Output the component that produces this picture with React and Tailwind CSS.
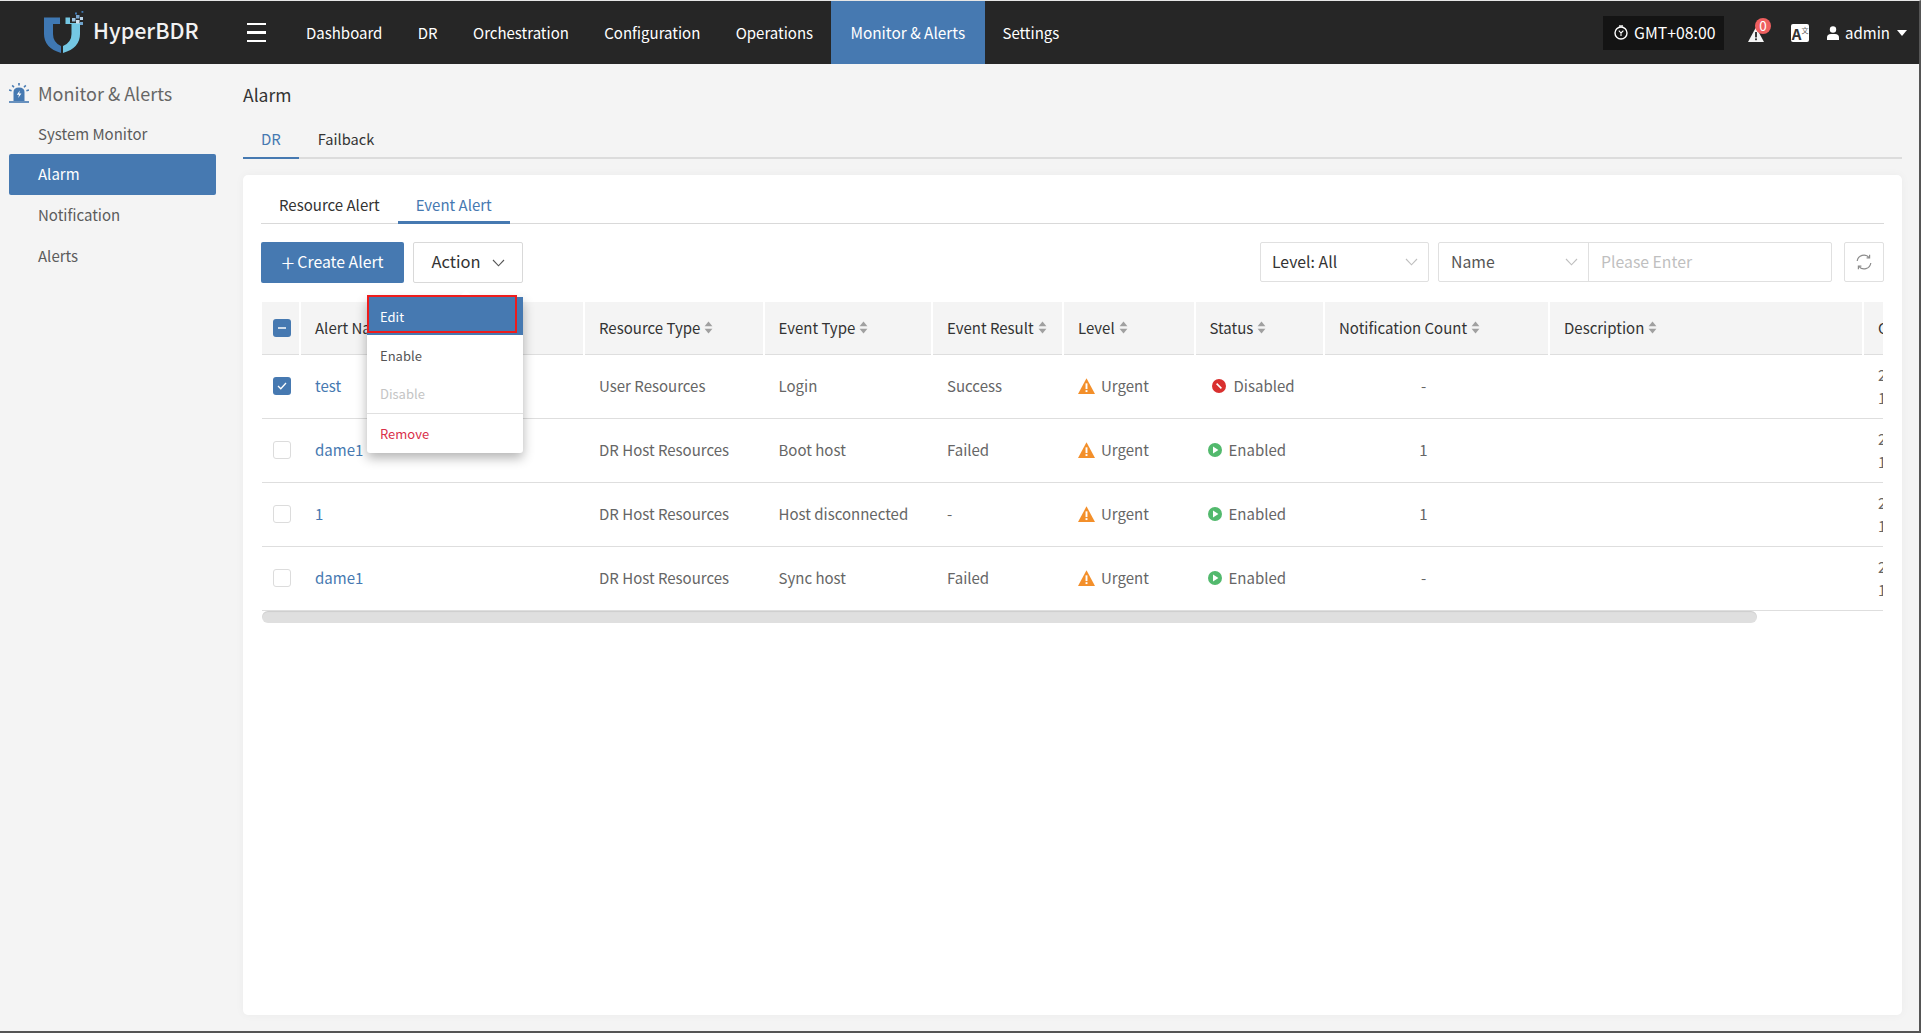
import React from 'react';

const font = "[font-family:'Noto_Sans_CJK_SC','Noto_Sans',sans-serif]";

function Logo() {
  return (
    <svg width="44" height="48" viewBox="40 10 44 48" className="shrink-0">
      <path d="M44 18.5 H60 V25 H53 V35 Q53 43.5 61 47 V54 Q44 49 44 35 Z" fill="#3f78b3" />
      <path d="M65.5 18.5 H80 V35 Q80 49 63 54 V47 Q71.5 43.5 71.5 35 V25 H65.5 Z" fill="#74c7e3" />
      <rect x="70" y="15" width="10.5" height="9" fill="#262626" />
      <rect x="72" y="19" width="3.5" height="3.5" fill="#9cc2e0" />
      <rect x="76" y="16" width="3.5" height="3.5" fill="#7aa6cf" />
      <rect x="76" y="21" width="3.5" height="3.5" fill="#cfe0ee" />
      <rect x="80" y="18" width="3" height="3" fill="#b9d2e6" />
      <rect x="80" y="23" width="3" height="3" fill="#6fa3cc" />
      <rect x="81.5" y="12" width="1.8" height="1.8" fill="#3f78b3" />
      <rect x="75" y="13.5" width="2" height="2" fill="#3f78b3" />
    </svg>
  );
}

function Siren() {
  return (
    <svg width="20" height="20" viewBox="0 0 20 20" className="shrink-0">
      <path d="M4.5 18 V9 Q4.5 4.5 10 4.5 Q15.5 4.5 15.5 9 V18 Z" fill="#4679b1" />
      <rect x="0" y="18.2" width="20" height="1.6" fill="#4679b1" />
      <path d="M10.8 7.5 L7.8 11.8 H10 L9.2 15 L12.4 10.6 H10.2 Z" fill="#fff" />
      <path d="M10 0 V2.6 M3.2 2.4 L5 4.2 M16.8 2.4 L15 4.2 M0 7 L2.6 7.8 M20 7 L17.4 7.8" stroke="#4679b1" strokeWidth="1.6" fill="none" />
    </svg>
  );
}

function Clock() {
  return (
    <svg width="14" height="15" viewBox="0 0 14 15" className="shrink-0">
      <circle cx="7" cy="8" r="6" fill="none" stroke="#fff" strokeWidth="1.4" />
      <path d="M5 1 H9" stroke="#fff" strokeWidth="1.4" />
      <path d="M7 8 L4.8 5.6 M7 8 L9.4 5.6 M7 8 V11" stroke="#fff" strokeWidth="1.1" />
    </svg>
  );
}

function Warn({ color = '#f38f2a', mark = '#fff', w = 17, h = 16 }) {
  return (
    <svg width={w} height={h} viewBox="0 0 16 15" className="shrink-0">
      <path d="M8 0.3 L16 15 H0 Z" fill={color} />
      <rect x="7.1" y="5" width="1.8" height="5.4" fill={mark} />
      <rect x="7.1" y="11.4" width="1.8" height="1.8" fill={mark} />
    </svg>
  );
}

function Sort() {
  return (
    <svg width="9" height="13" viewBox="0 0 8 12" className="ml-[4px] shrink-0">
      <path d="M4 0.5 L7.6 4.8 H0.4 Z" fill="#a0a0a0" />
      <path d="M4 11.5 L7.6 7.2 H0.4 Z" fill="#a0a0a0" />
    </svg>
  );
}

function Chevron({ className = '', color = '#bfbfbf' }) {
  return (
    <svg width="13" height="8" viewBox="0 0 13 8" className={className}>
      <path d="M1 1 L6.5 6.8 L12 1" stroke={color} strokeWidth="1.1" fill="none" />
    </svg>
  );
}

function Check({ state }) {
  if (state === 'none') {
    return <span className="block h-[18px] w-[18px] rounded-[3px] border border-[#dcdcdc] bg-white" />;
  }
  return (
    <span className="flex h-[18px] w-[18px] items-center justify-center rounded-[3px] bg-[#4679b1]">
      {state === 'some' ? (
        <span className="h-[2px] w-[8px] bg-[#cfdcea]" />
      ) : (
        <svg width="10" height="8" viewBox="0 0 10 8">
          <path d="M1 4 L3.8 6.8 L9 1" stroke="#fff" strokeWidth="1.3" fill="none" />
        </svg>
      )}
    </span>
  );
}

function Status({ enabled }) {
  if (enabled) {
    return (
      <span className="flex items-center">
        <svg width="14" height="14" viewBox="0 0 14 14" className="mr-[7px] shrink-0">
          <circle cx="7" cy="7" r="7" fill="#52b96d" />
          <path d="M5 3.6 L10.4 7 L5 10.4 Z" fill="#fff" />
        </svg>
        Enabled
      </span>
    );
  }
  return (
    <span className="flex items-center pl-[4px]">
      <svg width="14" height="14" viewBox="0 0 14 14" className="mr-[8px] shrink-0">
        <circle cx="7" cy="7" r="7" fill="#d9302f" />
        <path d="M4.6 4.6 L9.4 9.4" stroke="#fff" strokeWidth="1.6" />
      </svg>
      Disabled
    </span>
  );
}

const columns = [
  { w: 'w-[179.5px]', label: 'Resource Type' },
  { w: 'w-[168.5px]', label: 'Event Type' },
  { w: 'w-[131px]', label: 'Event Result' },
  { w: 'w-[131.5px]', label: 'Level' },
  { w: 'w-[129.5px]', label: 'Status' },
  { w: 'w-[225px]', label: 'Notification Count' },
  { w: 'w-[314px]', label: 'Description' },
];

const rows = [
  { check: 'all', name: 'test', res: 'User Resources', type: 'Login', result: 'Success', enabled: false, count: '-' },
  { check: 'none', name: 'dame1', res: 'DR Host Resources', type: 'Boot host', result: 'Failed', enabled: true, count: '1' },
  { check: 'none', name: '1', res: 'DR Host Resources', type: 'Host disconnected', result: '-', enabled: true, count: '1' },
  { check: 'none', name: 'dame1', res: 'DR Host Resources', type: 'Sync host', result: 'Failed', enabled: true, count: '-' },
];

const navItems = ['Dashboard', 'DR', 'Orchestration', 'Configuration', 'Operations', 'Monitor & Alerts', 'Settings'];

export default function App() {
  return (
    <div className={`flex h-[1033px] w-[1921px] flex-col overflow-hidden border-t border-r-2 border-b-2 border-t-[#e6e6e6] border-r-[#555] border-b-[#555] bg-[#f4f4f4] text-[15px] ${font}`}>
      <header className="flex h-[63px] shrink-0 items-center bg-[#262626] text-white">
        <div className="ml-[40px] flex w-[198px] items-center">
          <Logo />
          <span className="ml-[9px] -translate-y-[2px] text-[21.5px] font-medium text-[#f2f2f2]">HyperBDR</span>
        </div>
        <div className="ml-[9px] flex w-[19px] flex-col gap-[6px]">
          <span className="h-[2.5px] bg-white" />
          <span className="h-[2.5px] bg-white" />
          <span className="h-[2.5px] bg-white" />
        </div>
        <nav className="ml-[22.3px] flex h-full">
          {navItems.map((n) => (
            <span
              key={n}
              className={`flex h-full items-center pt-[1px] whitespace-nowrap ${n === 'Monitor & Alerts' ? 'w-[154px] justify-center bg-[#4679b1] text-[15.4px]' : 'px-[17.7px]'}`}
            >
              {n}
            </span>
          ))}
        </nav>
        <div className="ml-auto flex items-center pr-[12px]">
          <div className="flex h-[34px] w-[121px] items-center bg-[#141414] pl-[11px] text-[15.8px]">
            <Clock />
            <span className="ml-[6px]">GMT+08:00</span>
          </div>
          <div className="relative ml-[24px] h-[18px] w-[18px] pt-[3px]">
            <Warn color="#f4f4f4" mark="#262626" w={16} h={15} />
            <span className="absolute -top-[6px] left-[7px] flex h-[16px] w-[16px] items-center justify-center rounded-full bg-[#ef5f5f] text-[13.5px] leading-none text-white">0</span>
          </div>
          <div className="ml-[25px] flex h-[18px] w-[18px] items-end justify-center rounded-[2px] bg-white leading-none">
            <span className="text-[15px] leading-[16px] font-bold text-[#333]">A</span>
            <span className="mb-[8px] text-[7px] leading-none text-[#666]">文</span>
          </div>
          <svg width="12" height="14" viewBox="0 0 12 14" className="ml-[18px] shrink-0">
            <circle cx="6" cy="3.5" r="3.2" fill="#fff" />
            <path d="M0 14 V11.5 Q0 8 4 8 H8 Q12 8 12 11.5 V14 Z" fill="#fff" />
          </svg>
          <span className="ml-[6px] translate-y-[1px]">admin</span>
          <svg width="10" height="6" viewBox="0 0 10 6" className="ml-[7px]">
            <path d="M0 0 H10 L5 6 Z" fill="#fff" />
          </svg>
        </div>
      </header>

      <div className="flex min-h-0 flex-1">
        <aside className="w-[243px] shrink-0 pt-[9px] pl-[9px] text-[#5c5c5c]">
          <div className="flex h-[40px] items-center text-[18px] text-[#666]">
            <Siren />
            <span className="ml-[9px]">Monitor &amp; Alerts</span>
          </div>
          {['System Monitor', 'Alarm', 'Notification', 'Alerts'].map((s) => (
            <div
              key={s}
              className={`flex h-[41px] w-[207px] items-center rounded-[2px] pl-[29px] ${s === 'Alarm' ? 'bg-[#4679b1] text-white' : ''} ${s === 'System Monitor' ? 'pt-[2px]' : ''}`}
            >
              {s}
            </div>
          ))}
        </aside>

        <main className="flex min-w-0 flex-1 flex-col pr-[17px] pb-[16px]">
          <div className="flex h-[47px] items-end pb-[3px] text-[17.5px] leading-[26px] text-[#333]">Alarm</div>
          <div className="flex h-[48px] border-b-2 border-[#dcdcdc]">
            <span className="-mb-[2px] h-[48px] border-b-2 border-[#4679b1] px-[18px] pt-[17px] leading-[22px] text-[#4679b1]">DR</span>
            <span className="h-[48px] px-[19px] pt-[17px] text-[14.6px] leading-[22px] text-[#333]">Failback</span>
          </div>

          <section className="relative mt-[16px] flex-1 rounded-[5px] bg-white px-[18px] shadow-[0_0_10px_rgba(0,0,0,0.04)]">
            <div className="flex h-[49px] border-b border-[#d9d9d9]">
              <span className="h-[49px] px-[18px] pt-[19px] leading-[22px] text-[#333]">Resource Alert</span>
              <span className="h-[49px] border-b-[3px] border-[#4679b1] px-[18px] pt-[19px] leading-[22px] text-[#4679b1]">Event Alert</span>
            </div>

            <div className="mt-[18px] flex items-start">
              <button className="flex h-[41px] w-[143px] items-center justify-center rounded-[2px] bg-[#4679b1] pb-[2px] text-[15.8px] text-white">
                <span className="mr-[3px] text-[24px] leading-none font-light">+</span>Create Alert
              </button>
              <button className="ml-[9px] flex h-[41px] w-[110px] items-center justify-center rounded-[2px] border border-[#d9d9d9] bg-white pb-[2px] text-[16.5px] text-[#333]">
                Action
                <Chevron className="mt-[2px] ml-[11px]" color="#555" />
              </button>
              <div className="ml-auto flex h-[40px] w-[169px] items-center justify-between rounded-[2px] border border-[#e0e0e0] pr-[10px] pl-[11px] text-[15.8px] text-[#333]">
                Level: All
                <Chevron />
              </div>
              <div className="ml-[9px] flex h-[40px] w-[394px] items-center rounded-[2px] border border-[#e0e0e0] text-[15.8px]">
                <div className="flex h-full w-[150px] items-center justify-between border-r border-[#e0e0e0] pr-[10px] pl-[12px] text-[#555]">
                  Name
                  <Chevron />
                </div>
                <span className="pl-[12px] text-[#bfbfbf]">Please Enter</span>
              </div>
              <div className="ml-[12px] flex h-[40px] w-[40px] items-center justify-center rounded-[2px] border border-[#e0e0e0]">
                <svg width="16" height="16" viewBox="0 0 16 16" fill="none" stroke="#8c8c8c" strokeWidth="1.2">
                  <path d="M1.2 7 A6.8 6.8 0 0 1 13.2 3.6" />
                  <path d="M14.8 9 A6.8 6.8 0 0 1 2.8 12.4" />
                  <path d="M13.6 0.8 V3.9 H10.6" />
                  <path d="M2.4 15.2 V12.1 H5.4" />
                </svg>
              </div>
            </div>

            <div className="mx-px mt-[19px] overflow-hidden">
              <table className="w-[1880.5px] table-fixed border-collapse">
                <colgroup>
                  <col className="w-[38px]" />
                  <col className="w-[284px]" />
                  {columns.map((c) => <col key={c.label} className={c.w} />)}
                  <col className="w-[280px]" />
                </colgroup>
                <thead>
                  <tr className="h-[52px] bg-[#f4f4f4] text-left text-[#333]">
                    <th className="border-b border-[#dedede] pl-[11px] font-normal"><Check state="some" /></th>
                    <th className="border-b border-l-2 border-[#dedede] border-l-white pl-[14px] font-normal">Alert Name</th>
                    {columns.map((c) => (
                      <th key={c.label} className="border-b border-l-2 border-[#dedede] border-l-white pl-[14px] font-normal">
                        <span className="flex items-center whitespace-nowrap">{c.label}<Sort /></span>
                      </th>
                    ))}
                    <th className="border-b border-l-2 border-[#dedede] border-l-white pl-[14px] font-normal whitespace-nowrap">Create Time</th>
                  </tr>
                </thead>
                <tbody className="text-[#666]">
                  {rows.map((r, i) => (
                    <tr key={i} className="h-[64px] border-b border-[#dedede]">
                      <td className="pl-[11px]"><Check state={r.check} /></td>
                      <td className="pl-[15px] text-[#4679b1]">{r.name}</td>
                      <td className="pl-[15px]">{r.res}</td>
                      <td className="pl-[15px]">{r.type}</td>
                      <td className="pl-[15px]">{r.result}</td>
                      <td className="pl-[15px]">
                        <span className="flex items-center"><Warn /><span className="ml-[6px]">Urgent</span></span>
                      </td>
                      <td className="pl-[13px]"><Status enabled={r.enabled} /></td>
                      <td className="pr-[2px] text-center"><span className="relative -left-[12px]">{r.count}</span></td>
                      <td />
                      <td className="pl-[15px] leading-[23px]">2<br />1</td>
                    </tr>
                  ))}
                </tbody>
              </table>
              <div className="h-[12px] w-[1495px] rounded-[6px] bg-[#dfdfdf] shadow-[inset_0_1px_1px_rgba(0,0,0,0.08)]" />
            </div>

            <div className="absolute top-[122px] left-[124px] w-[156px] rounded-[3px] bg-white text-[13px] text-[#555] shadow-[0_5px_12px_rgba(0,0,0,0.3)]">
              <span className="absolute -top-[5px] left-[94px] h-[10px] w-[10px] rotate-45 bg-white" />
              <div className="relative flex h-[38px] items-center bg-[#4679b1] pt-[1px] pl-[13px] text-white">
                Edit
                <span className="absolute -top-[2px] left-0 h-[38px] w-[150px] border-2 border-[#ee1c1c]" />
              </div>
              <div className="mt-[1px] flex h-[38px] items-center pt-[1px] pl-[13px]">Enable</div>
              <div className="flex h-[38px] items-center pt-[1px] pl-[13px] text-[#c4c4c4]">Disable</div>
              <div className="mt-[1px] h-px bg-[#e0e0e0]" />
              <div className="flex h-[39px] items-center pt-[1px] pl-[13px] text-[#d9304a]">Remove</div>
            </div>
          </section>
        </main>
      </div>
    </div>
  );
}
